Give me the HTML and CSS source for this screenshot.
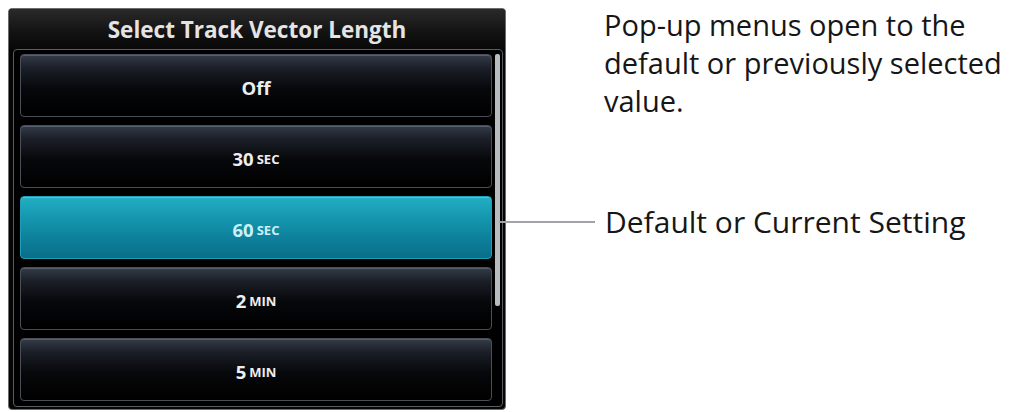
FILE: index.html
```html
<!DOCTYPE html>
<html>
<head>
<meta charset="utf-8">
<link rel="stylesheet" href="styles.css">
</head>
<body>
<div class="page">
  <div class="panel">
    <div class="title">Select Track Vector Length</div>
    <div class="list">
      <div class="items">
        <div class="item">Off</div>
        <div class="item">30<span class="unit">SEC</span></div>
        <div class="item selected">60<span class="unit">SEC</span></div>
        <div class="item">2<span class="unit">MIN</span></div>
        <div class="item">5<span class="unit">MIN</span></div>
      </div>
      <div class="track"><div class="thumb"></div></div>
    </div>
  </div>
  <div class="notes">
    <p class="note">Pop-up menus open to the default or previously selected value.</p>
    <div class="callout"><span class="leader"></span><span class="callout-text">Default or Current Setting</span></div>
  </div>
</div>
</body>
</html>
```
FILE: styles.css
```css
html, body {
  margin: 0;
  padding: 0;
  background: #ffffff;
}
body {
  width: 1015px;
  height: 412px;
  overflow: hidden;
  font-family: "Open Sans", "Liberation Sans", sans-serif;
}
.page {
  display: flex;
  padding: 8px 0 0 8px;
}
.panel {
  width: 496px;
  height: 400px;
  border: 1px solid #6a6d70;
  border-radius: 4px;
  background: #050505;
  display: flex;
  flex-direction: column;
  overflow: hidden;
}
.title {
  height: 41px;
  display: flex;
  align-items: center;
  justify-content: center;
  color: #e4e4e4;
  font-weight: 700;
  font-size: 22.5px;
  background: linear-gradient(#2a2a2a, #121212 60%, #080808);
}
.list {
  flex: 1;
  margin: 0 2px 2px 4px;
  border: 1px solid #5a5d62;
  border-radius: 4px;
  display: flex;
  padding: 4px 2px 5px 6px;
  gap: 3px;
  background: #000;
}
.items {
  flex: 1;
  display: flex;
  flex-direction: column;
  gap: 8px;
}
.item {
  box-sizing: border-box;
  height: 63px;
  border: 1px solid #4a4f57;
  border-radius: 4px;
  background: linear-gradient(#343c49 0%, #1a1e26 22%, #07080b 55%, #000 100%);
  box-shadow: inset 0 1px 0 #56606e;
  display: flex;
  align-items: center;
  justify-content: center;
  padding-top: 3px;
  color: #eeeeee;
  font-weight: 700;
  font-size: 18.5px;
}
.item.selected {
  border-color: #1f9fb4;
  background: linear-gradient(#22aec3 0%, #1596ae 35%, #0d7f9a 70%, #0a6e89 100%);
  box-shadow: inset 0 1px 0 #4fc6d6;
  color: #c9f1f7;
}
.unit {
  font-size: 13px;
  margin-left: 3px;
  position: relative;
  top: 1px;
}
.track {
  width: 5px;
  display: flex;
  flex-direction: column;
}
.thumb {
  height: 252px;
  background: #b9bcbf;
  border-radius: 2px;
}
.notes {
  flex: 1;
  display: flex;
  flex-direction: column;
}
.note {
  margin: -2px 0 0 98px;
  width: 410px;
  font-size: 29px;
  line-height: 38px;
  color: #161616;
}
.callout {
  display: flex;
  align-items: center;
  margin: 83px 0 0 -7px;
}
.leader {
  width: 96px;
  height: 2px;
  background: #a0a4a8;
  margin-right: 10px;
}
.callout-text {
  font-size: 30px;
  line-height: 38px;
  color: #161616;
}
```
